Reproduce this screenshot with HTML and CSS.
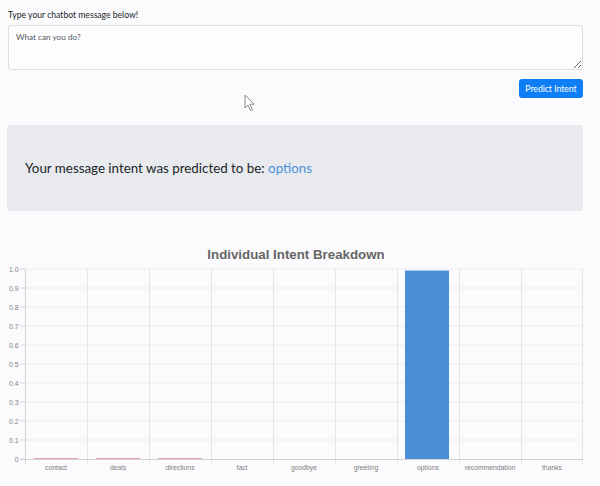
FILE: index.html
```html
<!DOCTYPE html>
<html>
<head>
<meta charset="utf-8">
<link rel="stylesheet" href="styles.css">
</head>
<body>
<div class="page">
  <form class="form">
    <label class="label" for="msg">Type your chatbot message below!</label>
    <textarea id="msg" class="input">What can you do?</textarea>
    <div class="actions"><button type="button" class="btn">Predict Intent</button></div>
  </form>
  <div class="result">
    <p class="result-text">Your message intent was predicted to be: <span class="intent">options</span></p>
  </div>
  <svg class="chart" viewBox="0 236 600 250" width="600" height="250">
    <text class="title" x="296" y="259" text-anchor="middle">Individual Intent Breakdown</text>
    <g class="grid">
      <line x1="25" y1="269" x2="583" y2="269"/>
      <line x1="25" y1="288" x2="583" y2="288"/>
      <line x1="25" y1="307" x2="583" y2="307"/>
      <line x1="25" y1="326" x2="583" y2="326"/>
      <line x1="25" y1="345" x2="583" y2="345"/>
      <line x1="25" y1="364" x2="583" y2="364"/>
      <line x1="25" y1="383" x2="583" y2="383"/>
      <line x1="25" y1="402" x2="583" y2="402"/>
      <line x1="25" y1="421" x2="583" y2="421"/>
      <line x1="25" y1="440" x2="583" y2="440"/>
    </g>
    <g class="vgrid">
      <line x1="87.5" y1="269" x2="87.5" y2="464"/>
      <line x1="149.5" y1="269" x2="149.5" y2="464"/>
      <line x1="211.5" y1="269" x2="211.5" y2="464"/>
      <line x1="273.5" y1="269" x2="273.5" y2="464"/>
      <line x1="335.5" y1="269" x2="335.5" y2="464"/>
      <line x1="397.5" y1="269" x2="397.5" y2="464"/>
      <line x1="459.5" y1="269" x2="459.5" y2="464"/>
      <line x1="521.5" y1="269" x2="521.5" y2="464"/>
      <line x1="582.5" y1="269" x2="582.5" y2="464"/>
    </g>
    <g class="ticks">
      <line x1="20" y1="269" x2="25" y2="269"/>
      <line x1="20" y1="288" x2="25" y2="288"/>
      <line x1="20" y1="307" x2="25" y2="307"/>
      <line x1="20" y1="326" x2="25" y2="326"/>
      <line x1="20" y1="345" x2="25" y2="345"/>
      <line x1="20" y1="364" x2="25" y2="364"/>
      <line x1="20" y1="383" x2="25" y2="383"/>
      <line x1="20" y1="402" x2="25" y2="402"/>
      <line x1="20" y1="421" x2="25" y2="421"/>
      <line x1="20" y1="440" x2="25" y2="440"/>
      <line x1="20" y1="459" x2="25" y2="459"/>
    </g>
    <rect class="bar" x="405" y="270.5" width="44" height="188.5"/>
    <g class="minor">
      <line x1="34" y1="458.5" x2="78" y2="458.5"/>
      <line x1="96" y1="458.5" x2="140" y2="458.5"/>
      <line x1="158" y1="458.5" x2="202" y2="458.5"/>
    </g>
    <g class="axis">
      <line x1="25.5" y1="269" x2="25.5" y2="464"/>
      <line x1="20" y1="459.5" x2="583" y2="459.5"/>
    </g>
    <g class="ylab" text-anchor="end">
      <text x="18.5" y="271.5">1.0</text>
      <text x="18.5" y="290.5">0.9</text>
      <text x="18.5" y="309.5">0.8</text>
      <text x="18.5" y="328.5">0.7</text>
      <text x="18.5" y="347.5">0.6</text>
      <text x="18.5" y="366.5">0.5</text>
      <text x="18.5" y="385.5">0.4</text>
      <text x="18.5" y="404.5">0.3</text>
      <text x="18.5" y="423.5">0.2</text>
      <text x="18.5" y="442.5">0.1</text>
      <text x="18.5" y="461.5">0</text>
    </g>
    <g class="xlab" text-anchor="middle">
      <text x="56" y="470">contact</text>
      <text x="118" y="470">deals</text>
      <text x="180" y="470">directions</text>
      <text x="242" y="470">fact</text>
      <text x="304" y="470">goodbye</text>
      <text x="366" y="470">greeting</text>
      <text x="428" y="470">options</text>
      <text x="490" y="470">recommendation</text>
      <text x="552" y="470">thanks</text>
    </g>
  </svg>
  <svg class="cursor" width="12" height="18" viewBox="0 0 12 18">
    <path d="M1 1 L1 14 L4 11 L6.5 16.5 L8.5 15.6 L6 10.2 L10.2 10.2 Z" fill="#ffffff" stroke="#8a8a8a" stroke-width="1"/>
  </svg>
</div>
</body>
</html>
```

FILE: styles.css
```css
html, body {
  margin: 0;
  padding: 0;
  background: #fbfbfd;
}
body {
  font-family: Lato, "Noto Sans", sans-serif;
  color: #212529;
}
.page {
  position: relative;
  width: 600px;
  height: 486px;
  overflow: hidden;
}
.form {
  display: flex;
  flex-direction: column;
  padding: 9px 17px 0 8px;
}
.label {
  font-size: 8.6px;
  line-height: 13px;
  height: 13px;
  margin-bottom: 3px;
}
.input {
  box-sizing: border-box;
  width: 575px;
  height: 45px;
  margin: 0;
  padding: 4px 7px;
  border: 1px solid #dcdee2;
  border-radius: 3px;
  background: #fdfdfe;
  font-family: Lato, "Noto Sans", sans-serif;
  font-size: 8.2px;
  line-height: 14px;
  color: #52585e;
  resize: vertical;
}
.actions {
  display: flex;
  justify-content: flex-end;
  margin-top: 9px;
}
.btn {
  box-sizing: border-box;
  width: 64px;
  height: 19px;
  padding: 0;
  border: 0;
  border-radius: 3px;
  background: #0d7ef5;
  color: #ffffff;
  font-family: Lato, "Noto Sans", sans-serif;
  font-size: 8.6px;
}
.result {
  box-sizing: border-box;
  margin: 27px 17px 0 7px;
  height: 86px;
  border-radius: 3px;
  background: #e8eaed;
  display: flex;
  align-items: center;
  padding: 0 18px;
}
.result-text {
  margin: 0;
  font-size: 13.35px;
  color: #212529;
}
.intent {
  color: #4a8fd6;
}
.chart {
  display: block;
  margin-top: 25px;
}
.chart .title {
  font-family: "Liberation Sans", Arial, sans-serif;
  font-weight: bold;
  font-size: 13.3px;
  fill: #666666;
}
.grid line {
  stroke: #ededf0;
  stroke-width: 1;
}
.vgrid line {
  stroke: #e4e4e8;
  stroke-width: 1;
}
.ticks line {
  stroke: #d8d8dc;
  stroke-width: 1;
}
.axis line {
  stroke: #d2d2d6;
  stroke-width: 1;
}
.bar {
  fill: #4a8fd6;
}
.minor line {
  stroke: #e6a0aa;
  stroke-width: 1;
}
.ylab text, .xlab text {
  font-family: "Liberation Sans", Arial, sans-serif;
  font-size: 6.8px;
  fill: #808080;
}
.cursor {
  position: absolute;
  left: 244px;
  top: 94px;
}
```
